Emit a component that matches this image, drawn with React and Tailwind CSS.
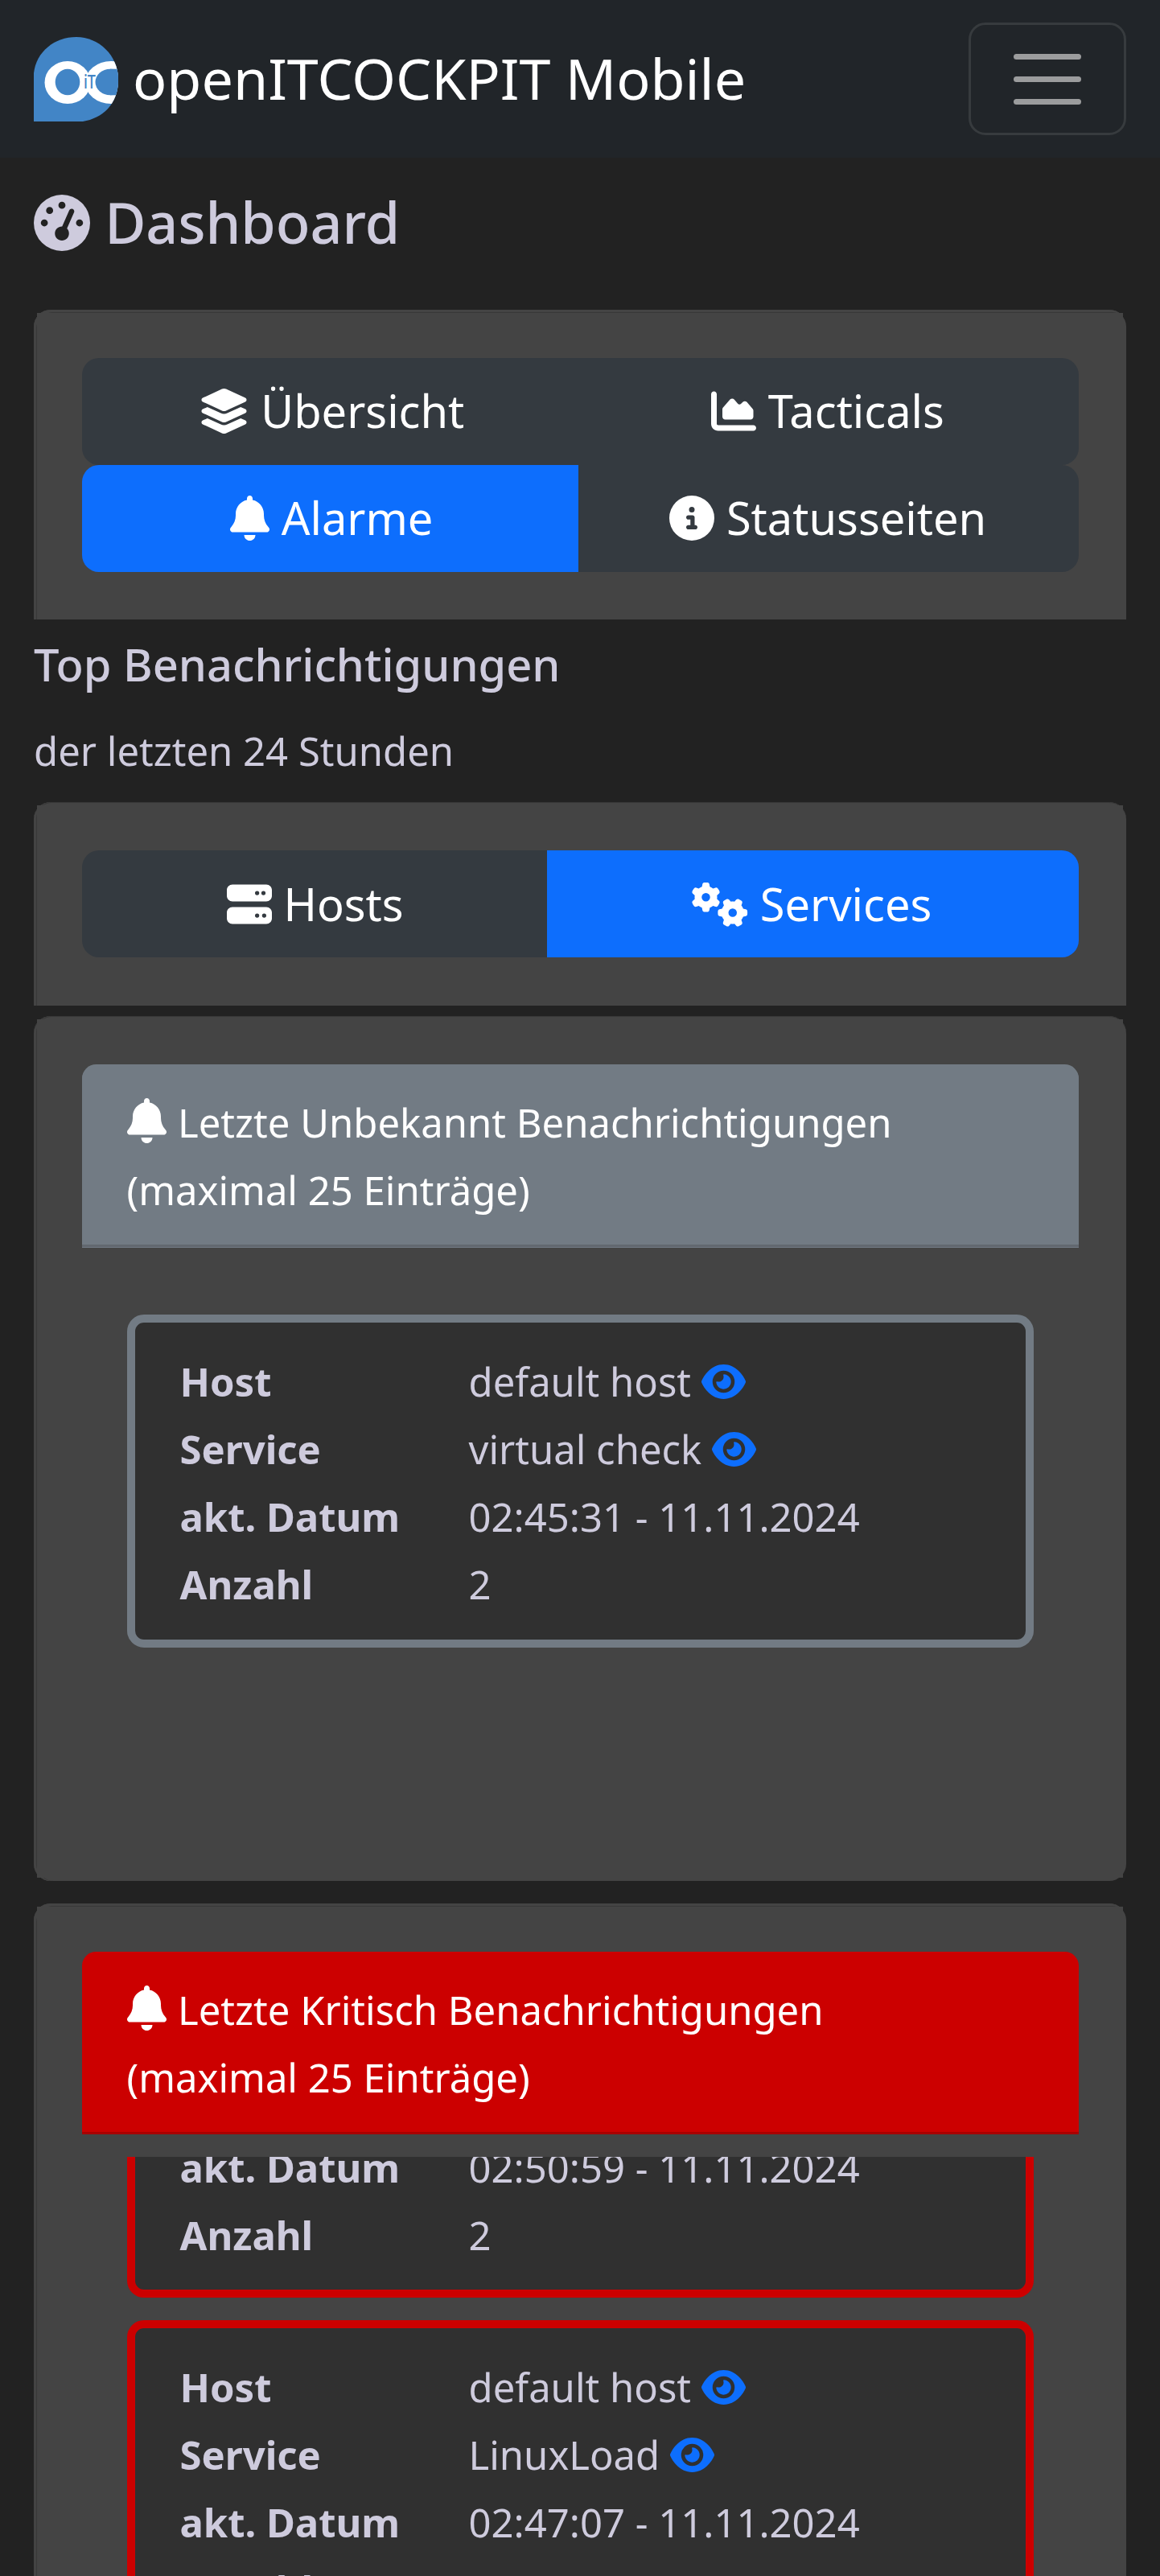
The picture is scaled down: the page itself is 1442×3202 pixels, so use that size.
import React from "react";
import {
  FaGaugeHigh,
  FaLayerGroup,
  FaChartArea,
  FaBell,
  FaCircleInfo,
  FaServer,
  FaGears,
  FaEye,
} from "react-icons/fa6";

const ICON = "inline-block h-[1em] align-[-0.125em]";

function Logo() {
  return (
    <svg className="h-[105px] w-[105px]" viewBox="0 0 105 105">
      <defs>
        <clipPath id="badge">
          <path d="M0 105V45C3 18 26 0 53 0s52 22 52 53-20 48-44 52Z" />
        </clipPath>
      </defs>
      <g clipPath="url(#badge)">
        <rect width="105" height="105" fill="#4285c6" />
        <ellipse cx="42" cy="56.5" rx="28.5" ry="26.5" fill="#fff" />
        <ellipse cx="96" cy="56.5" rx="32" ry="26.5" fill="#fff" />
        <ellipse cx="42" cy="56" rx="15.3" ry="16.3" fill="#4285c6" />
        <ellipse cx="95" cy="56" rx="18.5" ry="16.3" fill="#4285c6" />
        <rect x="95" y="39.7" width="10" height="32.6" fill="#4285c6" />
        <text
          x="62"
          y="64"
          fontSize="23"
          fontWeight="500"
          fontFamily="Noto Sans"
          textLength="15"
          lengthAdjust="spacingAndGlyphs"
          fill="#4285c6"
        >
          iT
        </text>
      </g>
    </svg>
  );
}

function Navbar() {
  return (
    <header className="flex h-[196px] items-center justify-between bg-[#212529] px-[42px]">
      <div className="flex items-center text-[70px] leading-[105px] text-white">
        <Logo />
        <span className="-mt-[2px] ml-[18px]">openITCOCKPIT Mobile</span>
      </div>
      <button className="flex h-[140px] w-[196px] flex-col items-center justify-center gap-[21px] rounded-[21px] border-[3.5px] border-[#373b3e]">
        <span className="h-[7px] w-[84px] rounded-full bg-[#9b9c9d]" />
        <span className="h-[7px] w-[84px] rounded-full bg-[#9b9c9d]" />
        <span className="h-[7px] w-[84px] rounded-full bg-[#9b9c9d]" />
      </button>
    </header>
  );
}

function Tab({ icon, label, className }) {
  return (
    <button className={"h-[133px] text-center text-[56px] leading-[84px] text-white " + className}>
      {icon} {label}
    </button>
  );
}

const LINE_TOP = "shadow-[inset_3px_3px_0_#444,inset_4px_4px_0_#383838]";
const LINE_EDGE =
  "shadow-[inset_0_1px_0_#383838,inset_3px_0_0_#444,inset_4px_0_0_#383838]";

function Card({ className, children }) {
  return (
    <section className={"bg-[#444] p-[4px] " + className}>
      <div className="h-full bg-[#444] px-[55.5px] pt-[55.5px]">{children}</div>
    </section>
  );
}

function Header({ title, className }) {
  return (
    <div
      className={
        "h-[227.5px] rounded-t-[17.5px] border-b-[3.5px] px-[56px] pt-[27px] text-[56px] leading-[84px] text-white " +
        className
      }
    >
      <FaBell className={ICON + " w-[49px]"} />{" "}
      <span className="text-[49px] leading-none">{title}</span>
      <br />
      <span className="text-[49px] leading-none">(maximal 25 Einträge)</span>
    </div>
  );
}

function Row({ label, value, link }) {
  return (
    <div className="flex h-[84px] text-[56px] leading-[84px]">
      <div className="w-[359px]">
        <span className="text-[49px] leading-none font-bold">{label}</span>
      </div>
      <div>
        <span className="text-[49px] leading-none">
          {value}
          {link && " "}
          {link && <FaEye className={ICON + " w-[55px] text-[#0d6efd]"} />}
        </span>
      </div>
    </div>
  );
}

function Entry({ service, time, className }) {
  return (
    <div
      className={
        "h-[413.25px] rounded-[21px] border-[10.5px] bg-[#303030] px-[56px] pt-[28px] " + className
      }
    >
      <Row label="Host" value="default host" link />
      <Row label="Service" value={service} link />
      <Row label="akt. Datum" value={time + " - 11.11.2024"} />
      <Row label="Anzahl" value="2" />
    </div>
  );
}

// Lower part of an entry that is scrolled partly out of its list.
function ScrolledEntry({ time, className }) {
  return (
    <div
      className={
        "h-[207.75px] rounded-b-[21px] border-[10.5px] border-t-0 bg-[#303030] px-[56px] " +
        className
      }
    >
      <Row label="akt. Datum" value={time + " - 11.11.2024"} />
      <Row label="Anzahl" value="2" />
    </div>
  );
}

export default function App() {
  return (
    <div className="h-[3202px] w-[1442px] overflow-hidden bg-[#222] font-['Noto_Sans',sans-serif] text-[#cecbdd]">
      <Navbar />
      <main className="px-[42px]">
        <h1 className="h-[189px] pt-[38px] text-[70px] leading-[84px] font-medium">
          <FaGaugeHigh className={ICON + " w-[70px]"} /> Dashboard
        </h1>

        <Card className={"h-[385px] rounded-t-[21px] " + LINE_TOP}>
          <div className="flex">
            <Tab
              icon={<FaLayerGroup className={ICON + " w-[63px]"} />}
              label="Übersicht"
              className="w-[621px] rounded-l-[21px] bg-[#343a40] pb-[2px]"
            />
            <Tab
              icon={<FaChartArea className={ICON + " w-[56px]"} />}
              label="Tacticals"
              className="flex-1 rounded-r-[21px] bg-[#343a40] pr-[5px] pb-[2px]"
            />
          </div>
          <div className="flex">
            <Tab
              icon={<FaBell className={ICON + " w-[49px]"} />}
              label="Alarme"
              className="w-[617.5px] rounded-l-[21px] bg-[#0d6efd] pb-[2px] pl-[4px]"
            />
            <Tab
              icon={<FaCircleInfo className={ICON + " w-[56px]"} />}
              label="Statusseiten"
              className="flex-1 rounded-r-[21px] bg-[#343a40] pr-[1px] pb-[2px]"
            />
          </div>
        </Card>

        <h2 className="h-[112px] pt-[22px] text-[56px] leading-[67px] font-medium">
          Top Benachrichtigungen
        </h2>
        <p className="h-[115.25px] pt-[9px] text-[49px] leading-[84px]">der letzten 24 Stunden</p>

        <Card className={"h-[252.25px] rounded-t-[21px] " + LINE_EDGE}>
          <div className="flex">
            <Tab
              icon={<FaServer className={ICON + " w-[56px]"} />}
              label="Hosts"
              className="w-[578.5px] rounded-l-[21px] bg-[#343a40] pl-[2px]"
            />
            <Tab
              icon={<FaGears className={ICON + " w-[70px]"} />}
              label="Services"
              className="flex-1 rounded-r-[21px] bg-[#0d6efd] pr-[2px]"
            />
          </div>
        </Card>

        <Card className={"mt-[13.75px] h-[1074.75px] rounded-[21px] " + LINE_EDGE}>
          <Header
            title="Letzte Unbekannt Benachrichtigungen"
            className="border-[#62686f] bg-[#727b84] shadow-[0_1px_0_#727b84]"
          />
          <div className="px-[56px] pt-[84px]">
            <Entry service="virtual check" time="02:45:31" className="border-[#727b84]" />
          </div>
        </Card>

        <Card className={"mt-[28px] h-[1074.75px] rounded-[21px] " + LINE_TOP}>
          <Header
            title="Letzte Kritisch Benachrichtigungen"
            className="border-[#a80000] bg-[#cc0000]"
          />
          <div className="mt-[28px] h-[700px] overflow-hidden px-[56px]">
            <div className="-mt-[32.5px] flex flex-col gap-[28px]">
              <ScrolledEntry time="02:50:59" className="border-[#cc0000]" />
              <Entry service="LinuxLoad" time="02:47:07" className="border-[#cc0000]" />
            </div>
          </div>
        </Card>
      </main>
    </div>
  );
}
